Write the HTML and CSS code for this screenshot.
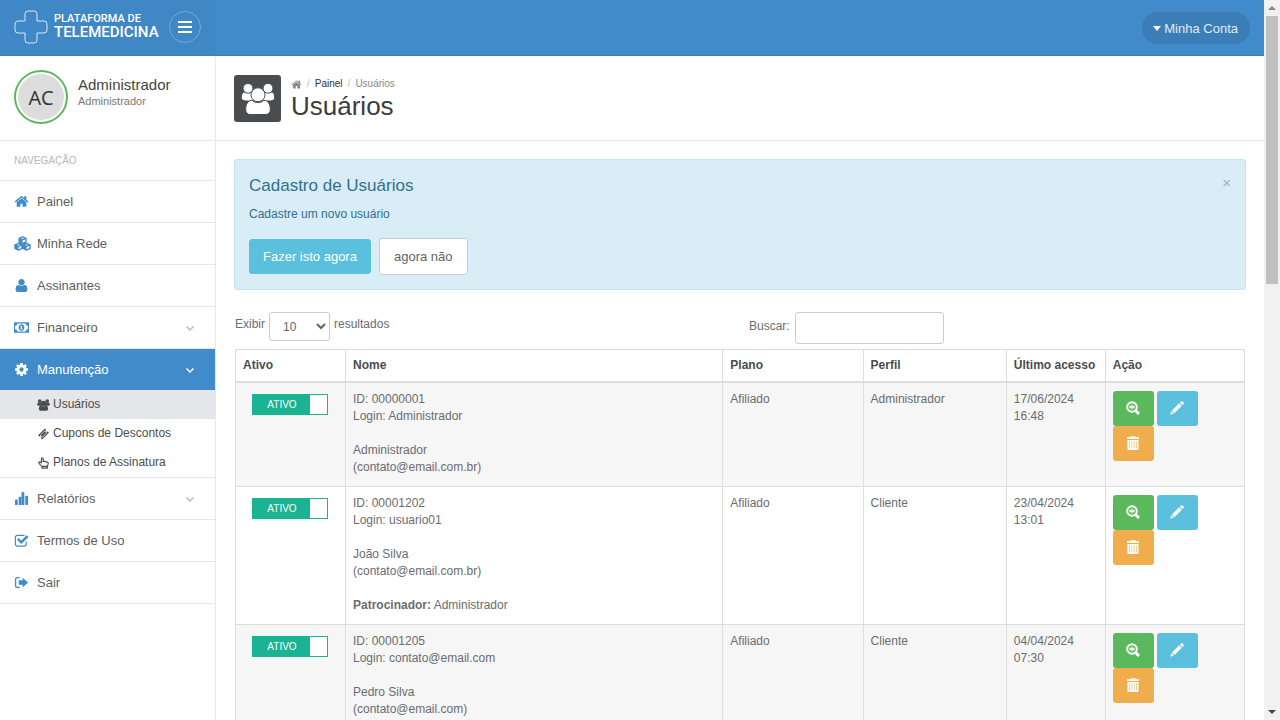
FILE: index.html
```html
<!DOCTYPE html>
<html lang="pt-BR">
<head>
<meta charset="utf-8">
<meta name="viewport" content="width=device-width, initial-scale=1">
<title>Usuários</title>
<link rel="stylesheet" href="styles.css">
</head>
<body>
<svg class="sprite" aria-hidden="true">
  <symbol id="home" viewBox="0 0 1792 1792"><path d="M1472 992v480q0 26-19 45t-45 19h-384v-384h-256v384h-384q-26 0-45-19t-19-45v-480q0-1 .5-3t.5-3l575-474 575 474q1 2 1 6zm223-69l-62 74q-8 9-21 11h-3q-13 0-21-7l-692-577-692 577q-12 8-24 7-13-2-21-11l-62-74q-8-10-7-23.5t11-21.5l719-599q32-26 76-26t76 26l244 204v-195q0-14 9-23t23-9h192q14 0 23 9t9 23v408l219 182q10 8 11 21.5t-7 23.5z"/></symbol>
  <symbol id="user" viewBox="0 0 1792 1792"><path d="M1600 1399q0 109-62.500 187t-150.500 78h-982q-88 0-150.500-78t-62.500-187q0-85 8.500-160.500t31.500-152 58.500-131 94-89 198.500-34.500q131 128 313 128t313-128q140 0 198.500 34.500t94 89 58.500 131 31.500 152 8.500 160.500zm-320-887q0 159-112.500 271.500t-271.500 112.500-271.500-112.500-112.500-271.500 112.500-271.500 271.500-112.500 271.500 112.500 112.500 271.500z"/></symbol>
  <symbol id="cog" viewBox="0 0 1792 1792"><path d="M1152 896q0-106-75-181t-181-75-181 75-75 181 75 181 181 75 181-75 75-181zm512-109v222q0 12-8 23t-20 13l-185 28q-19 54-39 91 35 50 107 138 10 12 10 25t-9 23q-27 37-99 108t-94 71q-12 0-26-9l-138-108q-44 23-91 38-16 136-29 186-7 28-36 28h-222q-14 0-24.500-8.500t-11.500-21.500l-28-184q-49-16-90-37l-141 107q-10 9-25 9-14 0-25-11-126-114-165-168-7-10-7-23 0-12 8-23 15-21 51-66.500t54-70.500q-27-50-41-99l-183-27q-13-2-21-12.500t-8-23.500v-222q0-12 8-23t19-13l186-28q14-46 39-92-40-57-107-138-10-12-10-24 0-10 9-23 26-36 98.500-107.500t94.500-71.500q13 0 26 10l138 107q44-23 91-38 16-136 29-186 7-28 36-28h222q14 0 24.500 8.500t11.500 21.500l28 184q49 16 90 37l142-107q9-9 24-9 13 0 25 10 129 119 165 170 7 8 7 22 0 12-8 23-15 21-51 66.500t-54 70.500q26 50 41 98l183 28q13 2 21 12.500t8 23.500z"/></symbol>
  <symbol id="cubes" viewBox="0 0 18 16"><g fill="none" stroke="currentColor" stroke-width="1.500" stroke-linejoin="round"><path d="M9 1l3.600 1.500v4L9 8 5.400 6.500v-4zM4.700 8l3.700 1.500v3.700L4.700 15 1 13.200V9.500zM13.300 8L17 9.500v3.700L13.300 15l-3.700-1.800V9.500z"/><path d="M5.400 2.500L9 4l3.600-1.500M1 9.500L4.700 11l3.700-1.500M9.600 9.500l3.700 1.500L17 9.500"/></g><path d="M5.400 2.500L9 4v4L5.400 6.500zM1 9.500L4.700 11v4L1 13.200zM9.600 9.500l3.700 1.500v4l-3.700-1.800z"/></symbol>
  <symbol id="money" viewBox="0 0 16 16"><path fill-rule="evenodd" d="M0 2.500h16v11H0zM3.600 3.700A2.500 2.500 0 0 1 1.200 6.100v3.800a2.500 2.500 0 0 1 2.400 2.400h8.800a2.500 2.500 0 0 1 2.400-2.400V6.100a2.500 2.500 0 0 1-2.400-2.400z"/><path fill-rule="evenodd" d="M8 4.600c2 0 3 1.500 3 3.400s-1 3.400-3 3.400S5 9.900 5 8s1-3.400 3-3.400zM7.800 6L6.500 7.100l.5.500.5-.3v1.800h-.8v.8h2.500v-.8h-.7V6z"/></symbol>
  <symbol id="group" viewBox="0 0 34 32"><g class="people"><path d="M4 9h7l3 3v6H5c-3 0-5-1.500-4.700-4C.5 11 1.500 9 4 9zM30 9h-7l-3 3v6h9c3 0 5-1.500 4.700-4C33.500 11 32.500 9 30 9z"/><circle cx="7" cy="5.300" r="4.900"/><circle cx="27" cy="5.300" r="4.900"/><path d="M11 17.300c3.500 3 8.500 3 12 0 4 0 6.300 4 6.300 9 0 3-1.600 5.200-4.300 5.200H9c-2.700 0-4.300-2.200-4.300-5.200 0-5 2.300-9 6.300-9z"/><circle cx="17" cy="11.800" r="7"/></g></symbol>
  <symbol id="ticket" viewBox="0 0 16 16"><path fill-rule="evenodd" d="M9.800.800l1.500 1.500a1.700 1.700 0 0 0 2.400 2.400l1.500 1.500-9 9-1.500-1.500a1.700 1.700 0 0 0-2.400-2.400L.8 9.800zM9.500 3.300L3.300 9.500l3.200 3.200 6.200-6.200zM9.500 4.300l2.200 2.200-5.200 5.200-2.200-2.200z"/></symbol>
  <symbol id="hand" viewBox="0 0 16 16"><path fill="none" stroke="currentColor" stroke-width="1.500" stroke-linejoin="round" d="M6 14.800V13L2 8.500C.8 7 2.800 5.700 4 7l1.200 1V2.200c0-1.700 2.300-1.700 2.300 0V6c.9-.8 2-.5 2.300.3 1-.6 2-.2 2.200.6 1.200-.4 2.300.3 2.300 1.400 0 2.200-1.100 3-1.100 4.700v1.800zM6 12.500h7"/></symbol>
  <symbol id="bars" viewBox="0 0 16 16"><rect x="1" y="9" width="3" height="6" rx="1"/><rect x="5" y="6" width="3" height="9" rx="1"/><rect x="8" y="1" width="3" height="14" rx="1"/><rect x="12" y="5" width="3" height="10" rx="1"/></symbol>
  <symbol id="check" viewBox="0 0 16 16"><path fill="none" stroke="currentColor" stroke-width="1.300" d="M13 9v2.800c0 1.300-.8 2.200-2.200 2.200H3.700c-1.400 0-2.200-.9-2.200-2.200V4.700c0-1.400.8-2.200 2.200-2.200h7.600"/><path d="M3.200 7.200l1.800-1.800 2.800 2.700 5.800-5.800 1.900 1.900-7.700 7.600z"/></symbol>
  <symbol id="exit" viewBox="0 0 16 16"><path fill="none" stroke="currentColor" stroke-width="1.400" d="M6 2.700H3.700c-1.300 0-2 .8-2 2v6.600c0 1.200.7 2 2 2H6"/><path d="M5 5.700h4.200V2.800l5.800 5.200-5.800 5.200v-2.900H5z"/></symbol>
  <symbol id="chevron" viewBox="0 0 10 10"><path fill="none" stroke="currentColor" stroke-width="1.500" d="M1.500 3.500L5 7l3.500-3.500"/></symbol>
  <symbol id="zoom" viewBox="0 0 14 14"><path fill="none" stroke="currentColor" stroke-width="3" d="M9.300 9.300l3.700 3.700"/><circle cx="6" cy="6" r="4.800" fill="none" stroke="currentColor" stroke-width="2"/><path d="M4.500 3.500h3v1h1v3h-1v1h-3v-1h-1v-3h1z" opacity=".45"/><path d="M3.500 5.300h5v1.400h-5z"/></symbol>
  <symbol id="pencil" viewBox="0 0 14 14"><path d="M10.900.5c.6-.5 1-.4 1.500 0l1.100 1.100c.5.500.5 1 0 1.500l-1 1L9.900 1.500zM9.200 2.200l2.600 2.600-7.300 7.300-2.600-2.600zM1.400 10.200l2.400 2.400L.3 13.700z"/></symbol>
  <symbol id="trash" viewBox="0 0 14 14"><path fill-rule="evenodd" d="M5 0h4l1 1.200h3V3H1V1.200h3zM5.300.800l-.3.400h4L8.700.8zM1.500 4h11v9c0 .6-.4 1-1 1h-9c-.6 0-1-.4-1-1zM3.400 5.300v7h.6v-7zM5.600 5.300v7h.6v-7zM7.800 5.300v7h.6v-7zM10 5.300v7h.6v-7z"/></symbol>
</svg>

<div class="window">
  <div class="app">
    <header class="topbar">
      <div class="brand">
        <svg class="logo-mark" viewBox="0 0 34 34" aria-hidden="true"><path d="M14 1h6a3 3 0 0 1 3 3v7h7a3 3 0 0 1 3 3v6a3 3 0 0 1-3 3h-7v7a3 3 0 0 1-3 3h-6a3 3 0 0 1-3-3v-7H4a3 3 0 0 1-3-3v-6a3 3 0 0 1 3-3h7V4a3 3 0 0 1 3-3z"/></svg>
        <div class="logo-text"><span class="logo-top">PLATAFORMA DE</span><span class="logo-bottom">TELEMEDICINA</span></div>
        <button class="menu-toggle" type="button" aria-label="Menu"><svg viewBox="0 0 14 12"><path d="M0 1h14M0 6h14M0 11h14"/></svg></button>
      </div>
      <button class="account" type="button"><span class="caret"></span>Minha Conta</button>
    </header>

    <div class="body">
      <aside class="sidebar">
        <div class="profile">
          <div class="avatar"><span>AC</span></div>
          <div><div class="profile-name">Administrador</div><div class="profile-role">Administrador</div></div>
        </div>
        <h2 class="nav-title">NAVEGAÇÃO</h2>
        <nav>
          <a class="nav-item" href="#"><svg class="nav-icon"><use href="#home"/></svg>Painel</a>
          <a class="nav-item" href="#"><svg class="nav-icon wide"><use href="#cubes"/></svg>Minha Rede</a>
          <a class="nav-item" href="#"><svg class="nav-icon"><use href="#user"/></svg>Assinantes</a>
          <a class="nav-item" href="#"><svg class="nav-icon"><use href="#money"/></svg>Financeiro<svg class="chevron"><use href="#chevron"/></svg></a>
          <a class="nav-item active" href="#"><svg class="nav-icon"><use href="#cog"/></svg>Manutenção<svg class="chevron"><use href="#chevron"/></svg></a>
          <div class="submenu">
            <a class="sub-item current" href="#"><svg class="sub-icon"><use href="#group"/></svg>Usuários</a>
            <a class="sub-item" href="#"><svg class="sub-icon"><use href="#ticket"/></svg>Cupons de Descontos</a>
            <a class="sub-item" href="#"><svg class="sub-icon"><use href="#hand"/></svg>Planos de Assinatura</a>
          </div>
          <a class="nav-item" href="#"><svg class="nav-icon"><use href="#bars"/></svg>Relatórios<svg class="chevron"><use href="#chevron"/></svg></a>
          <a class="nav-item" href="#"><svg class="nav-icon"><use href="#check"/></svg>Termos de Uso</a>
          <a class="nav-item" href="#"><svg class="nav-icon"><use href="#exit"/></svg>Sair</a>
        </nav>
      </aside>

      <main class="main">
        <div class="page-head">
          <div class="page-icon"><svg><use href="#group"/></svg></div>
          <div>
            <div class="crumbs"><a href="#" aria-label="Início"><svg><use href="#home"/></svg></a><i>/</i><a class="crumb-link" href="#">Painel</a><i>/</i><span>Usuários</span></div>
            <h1>Usuários</h1>
          </div>
        </div>

        <div class="content">
          <section class="alert">
            <button class="close" type="button" aria-label="Fechar">×</button>
            <h2>Cadastro de Usuários</h2>
            <p>Cadastre um novo usuário</p>
            <div class="alert-actions"><button class="btn" type="button">Fazer isto agora</button><button class="btn plain" type="button">agora não</button></div>
          </section>

          <div class="filters">
            <div class="filter"><label for="len">Exibir</label><select id="len"><option>10</option><option>25</option></select><label for="len">resultados</label></div>
            <div class="filter search"><label for="search">Buscar:</label><input id="search" type="text"></div>
          </div>

          <table>
            <colgroup><col class="c-active"><col class="c-name"><col class="c-plan"><col class="c-role"><col class="c-last"><col class="c-action"></colgroup>
            <thead><tr><th>Ativo</th><th>Nome</th><th>Plano</th><th>Perfil</th><th>Último acesso</th><th>Ação</th></tr></thead>
            <tbody>
              <tr>
                <td><label class="switch"><input type="checkbox" checked><span>ATIVO</span></label></td>
                <td>ID: 00000001<br>Login: Administrador<br><br>Administrador<br>(contato@email.com.br)</td>
                <td>Afiliado</td><td>Administrador</td><td>17/06/2024<br>16:48</td>
                <td><div class="actions"><button class="act view" aria-label="Ver"><svg><use href="#zoom"/></svg></button><button class="act edit" aria-label="Editar"><svg><use href="#pencil"/></svg></button><button class="act del" aria-label="Excluir"><svg><use href="#trash"/></svg></button></div></td>
              </tr>
              <tr>
                <td><label class="switch"><input type="checkbox" checked><span>ATIVO</span></label></td>
                <td>ID: 00001202<br>Login: usuario01<br><br>João Silva<br>(contato@email.com.br)<br><br><b>Patrocinador:</b> Administrador</td>
                <td>Afiliado</td><td>Cliente</td><td>23/04/2024<br>13:01</td>
                <td><div class="actions"><button class="act view" aria-label="Ver"><svg><use href="#zoom"/></svg></button><button class="act edit" aria-label="Editar"><svg><use href="#pencil"/></svg></button><button class="act del" aria-label="Excluir"><svg><use href="#trash"/></svg></button></div></td>
              </tr>
              <tr>
                <td><label class="switch"><input type="checkbox" checked><span>ATIVO</span></label></td>
                <td>ID: 00001205<br>Login: contato@email.com<br><br>Pedro Silva<br>(contato@email.com)</td>
                <td>Afiliado</td><td>Cliente</td><td>04/04/2024<br>07:30</td>
                <td><div class="actions"><button class="act view" aria-label="Ver"><svg><use href="#zoom"/></svg></button><button class="act edit" aria-label="Editar"><svg><use href="#pencil"/></svg></button><button class="act del" aria-label="Excluir"><svg><use href="#trash"/></svg></button></div></td>
              </tr>
            </tbody>
          </table>
        </div>
      </main>
    </div>
  </div>
  <div class="scrollbar" aria-hidden="true"><span class="arrow up"></span><span class="thumb"></span><span class="arrow down"></span></div>
</div>
</body>
</html>
```

FILE: styles.css
```css
* { box-sizing: border-box; }
body { margin: 0; font: 12px/17px "Liberation Sans", Arial, sans-serif; color: #6a6c6f; background: #fff; }
button, input, select { font-family: inherit; margin: 0; }
button { cursor: pointer; }
svg { fill: currentColor; display: block; }
a { color: inherit; text-decoration: none; }
h1, h2, p { margin: 0; font-weight: 400; }
.sprite { position: absolute; width: 0; height: 0; }
.people { stroke: var(--gap, transparent); stroke-width: 1; }

.window { display: flex; height: 100vh; overflow: hidden; }
.app { flex: 1; min-width: 0; display: flex; flex-direction: column; }

.topbar { flex: none; height: 56px; background: #428bca; border-bottom: 1px solid #3a7fbb; display: flex; align-items: center; justify-content: space-between; padding-right: 14px; }
.brand { width: 215px; height: 55px; padding: 0 14px 2px; display: flex; align-items: center; background: #4087c5; color: #fff; }
.logo-mark { width: 34px; height: 34px; fill: none; stroke: #d9e8f5; stroke-width: 1; }
.logo-text { margin-left: 6px; width: 115px; font-family: Roboto, sans-serif; white-space: nowrap; }
.logo-text span { display: block; }
.logo-top { font-size: 11px; line-height: 12px; font-weight: 500; }
.logo-bottom { font-size: 15px; line-height: 15px; font-weight: 500; }
.menu-toggle { flex: none; width: 32px; height: 32px; border: 1px solid #73aada; border-radius: 50%; background: none; padding: 0; display: grid; place-items: center; }
.menu-toggle svg { width: 14px; height: 12px; stroke: #fff; stroke-width: 2; }
.account { height: 32px; border: 0; border-radius: 16px; background: #3b7db6; color: #e0ebf5; font-size: 13px; padding: 2px 12px 0 11px; display: flex; align-items: center; gap: 3px; }
.caret { border: 4px solid transparent; border-top: 5px solid #fff; border-bottom: 0; }

.body { flex: 1; min-height: 0; display: flex; }
.sidebar { flex: none; width: 216px; border-right: 1px solid #e7e7e9; }
.profile { height: 85px; border-bottom: 1px solid #e7e7e9; padding: 14px; display: flex; gap: 10px; }
.avatar { width: 54px; height: 54px; border: 2px solid #5cb85c; border-radius: 50%; padding: 2px; }
.avatar span { display: grid; place-items: center; height: 100%; border-radius: 50%; background: #dcdcdc; color: #333; font: 20px "Open Sans", sans-serif; }
.profile-name { font-size: 15px; line-height: 18px; padding-top: 6px; color: #444; }
.profile-role { font-size: 11px; line-height: 14px; color: #777; }
.nav-title { font-size: 10px; line-height: 39px; padding-left: 14px; color: #b5b8bb; border-bottom: 1px solid #e7e7e9; }
.nav-item { height: 42px; border-bottom: 1px solid #e7e7e9; display: flex; align-items: center; font-size: 13px; padding: 0 20px 0 14px; color: #5c5e60; }
.nav-icon { width: 15px; height: 15px; margin-right: 8px; color: #428bca; }
.wide { width: 17px; margin-right: 6px; }
.chevron { width: 10px; height: 10px; margin-left: auto; color: #bbb; }
.active { height: 41px; border: 0; background: #428bca; color: #fff; }
.active .nav-icon, .active .chevron { color: #fff; }
.submenu { border-bottom: 1px solid #e7e7e9; }
.sub-item { height: 29px; display: flex; align-items: center; gap: 3px; padding-left: 37px; color: #4a4c4e; }
.sub-icon { width: 13px; height: 12px; }
.current { background: #e4e6e9; }

.main { flex: 1; min-width: 0; }
.page-head { height: 85px; border-bottom: 1px solid #e7e7e9; padding: 19px 18px; display: flex; gap: 10px; }
.page-icon { --gap: #4a4d50; width: 47px; height: 47px; border-radius: 3px; background: #4a4d50; color: #fff; display: grid; place-items: center; }
.page-icon svg { width: 34px; height: 32px; }
.crumbs { display: flex; align-items: center; gap: 5px; font-size: 10px; line-height: 18px; color: #888; }
.crumbs svg { width: 11px; height: 11px; }
.crumbs i { font-style: normal; color: #bbb; }
.crumb-link { color: #333; }
h1 { font-size: 26px; line-height: 26px; color: #3a3c3e; }

.content { padding: 18px 18px 0; }
.alert { position: relative; background: #d9edf7; border: 1px solid #bce8f1; border-radius: 3px; padding: 16px 14px 14px; color: #31708f; }
.alert h2 { font-size: 17px; line-height: 20px; }
.alert p { line-height: 17px; margin: 10px 0 15px; }
.alert-actions { display: flex; gap: 8px; align-items: center; }
.btn { font-size: 13px; line-height: 15px; border-radius: 3px; border: 1px solid #5bc0de; padding: 9px 13px; color: #fff; background: #5bc0de; }
.plain { border-color: #ccc; background: #fff; color: #636363; padding: 10px 14px; }
.close { position: absolute; top: 14px; right: 14px; border: 0; background: none; padding: 0; font-size: 15px; line-height: 18px; color: #9eb1bb; }

.filters { display: grid; grid-template-columns: 1fr 1fr; padding: 22px 0 5px; }
.filter { display: flex; align-items: flex-start; gap: 4px; padding-left: 1px; line-height: 24px; }
.search { padding-left: 9px; gap: 5px; line-height: 28px; }
select { width: 61px; height: 29px; border: 1px solid #ccc; border-radius: 3px; background: #fff; color: #636668; font-size: 12px; padding: 0 0 0 9px; }
input[type="text"] { width: 149px; height: 32px; border: 1px solid #ccc; border-radius: 3px; padding: 0 8px; }

table { width: calc(100% - 2px); margin-left: 1px; table-layout: fixed; border-collapse: collapse; }
.c-active { width: 10.9%; } .c-name { width: 37.4%; } .c-plan { width: 13.9%; } .c-role { width: 14.2%; } .c-last { width: 9.8%; } .c-action { width: 13.8%; }
th, td { border: 1px solid #ddd; text-align: left; vertical-align: top; padding: 8px 7px; }
th { color: #4a4c4e; border-bottom-width: 2px; padding: 7px; white-space: nowrap; }
td { padding-bottom: 10px; }
tbody tr:nth-child(odd) { background: #f6f6f6; }
td:first-child { text-align: center; }
.switch { display: inline-block; margin-top: 3px; width: 76px; height: 21px; border: 1px solid #1ab394; background: #fff; cursor: pointer; }
.switch input { position: absolute; opacity: 0; margin: 0; }
.switch span { display: block; width: 57px; height: 19px; background: #1ab394; color: #fff; font-size: 10px; line-height: 19px; text-align: center; }
.actions { display: flex; flex-wrap: wrap; column-gap: 3px; width: 90px; }
.act { width: 41px; height: 35px; border: 0; border-radius: 3px; color: #fff; padding: 0 0 2px; display: grid; place-items: center; }
.act svg { width: 14px; height: 14px; }
.view { background: #5cb85c; } .edit { background: #5bc0de; } .del { background: #f0ad4e; }

.scrollbar { flex: none; width: 16px; background: #f1f1f1; display: flex; flex-direction: column; align-items: center; }
.thumb { width: 12px; height: 268px; background: #c1c1c1; }
.arrow { border: 4px solid transparent; }
.up { border-bottom-color: #888; margin: 2px 0 6px; }
.down { border-top-color: #444; margin: auto 0 2px; }
```
